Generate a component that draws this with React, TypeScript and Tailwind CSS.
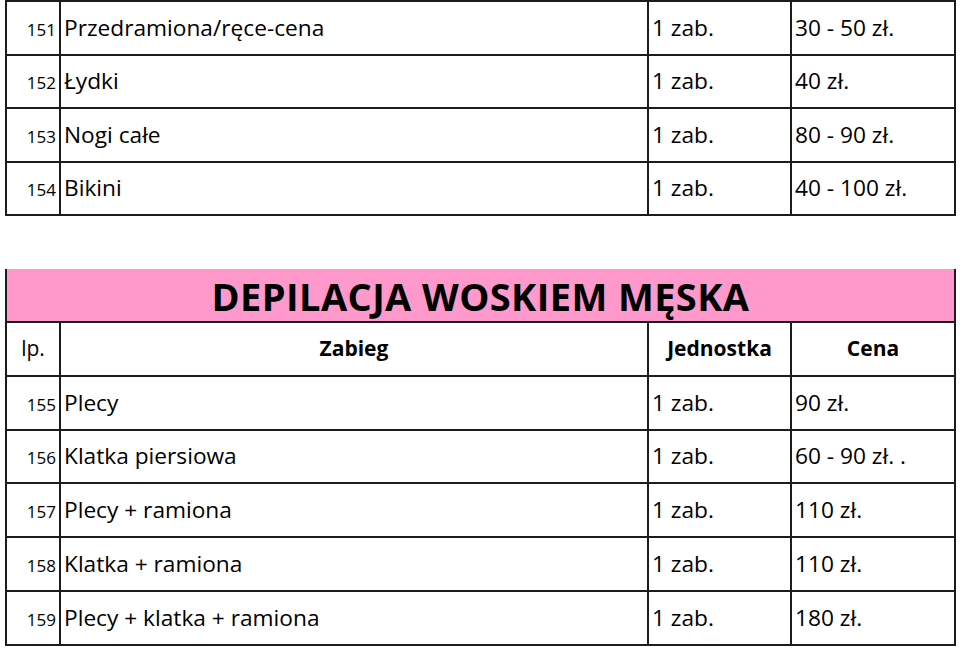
const font = { fontFamily: '"Open Sans", "Noto Sans", sans-serif' };

type Row = { lp: number; name: string; unit: string; price: string; h: string };

const top: Row[] = [
  { lp: 151, name: 'Przedramiona/ręce-cena', unit: '1 zab.', price: '30 - 50 zł.', h: 'h-[54px]' },
  { lp: 152, name: 'Łydki', unit: '1 zab.', price: '40 zł.', h: 'h-[53px]' },
  { lp: 153, name: 'Nogi całe', unit: '1 zab.', price: '80 - 90 zł.', h: 'h-[54px]' },
  { lp: 154, name: 'Bikini', unit: '1 zab.', price: '40 - 100 zł.', h: 'h-[53px]' },
];

const men: Row[] = [
  { lp: 155, name: 'Plecy', unit: '1 zab.', price: '90 zł.', h: 'h-[54px]' },
  { lp: 156, name: 'Klatka piersiowa', unit: '1 zab.', price: '60 - 90 zł. .', h: 'h-[53px]' },
  { lp: 157, name: 'Plecy + ramiona', unit: '1 zab.', price: '110 zł.', h: 'h-[54px]' },
  { lp: 158, name: 'Klatka + ramiona', unit: '1 zab.', price: '110 zł.', h: 'h-[54px]' },
  { lp: 159, name: 'Plecy + klatka + ramiona', unit: '1 zab.', price: '180 zł.', h: 'h-[54px]' },
];

const cols = 'grid grid-cols-[54px_588px_143px_164px]';
const cell = 'border-r-2 border-b-2 border-[#1c1c1c] flex items-center';

function PriceRow({ r }: { r: Row }) {
  return (
    <div className={`${cols} ${r.h}`}>
      <div className={`${cell} justify-end pr-[3px] pt-[3px] text-[17px]`}>{r.lp}</div>
      <div className={`${cell} pl-[3px] text-[22.7px]`}>{r.name}</div>
      <div className={`${cell} pl-[3px] text-[22.7px]`}>{r.unit}</div>
      <div className={`${cell} pl-[3px] text-[22.7px]`}>{r.price}</div>
    </div>
  );
}

export default function App() {
  return (
    <div className="w-[960px] h-[648px] bg-white text-black overflow-hidden" style={font}>
      <div className="ml-[5px] w-[951px] border-l-2 border-t-2 border-[#1c1c1c]">
        {top.map((r) => (
          <PriceRow key={r.lp} r={r} />
        ))}
      </div>

      <div className="ml-[5px] mt-[53px] w-[951px] border-l-2 border-[#1c1c1c]">
        <div className="h-[54px] bg-[#ff99cc] border-r-2 border-b-2 border-[#1c1c1c] flex items-center justify-center pt-[2px]">
          <span className="text-[38px] font-bold leading-none tracking-[0.4px]">DEPILACJA WOSKIEM MĘSKA</span>
        </div>
        <div className={`${cols} h-[54px]`}>
          <div className={`${cell} justify-center text-[21px]`}>lp.</div>
          <div className={`${cell} justify-center text-[21px] font-bold`}>Zabieg</div>
          <div className={`${cell} justify-center text-[21px] font-bold`}>Jednostka</div>
          <div className={`${cell} justify-center text-[21px] font-bold`}>Cena</div>
        </div>
        {men.map((r) => (
          <PriceRow key={r.lp} r={r} />
        ))}
      </div>
    </div>
  );
}
